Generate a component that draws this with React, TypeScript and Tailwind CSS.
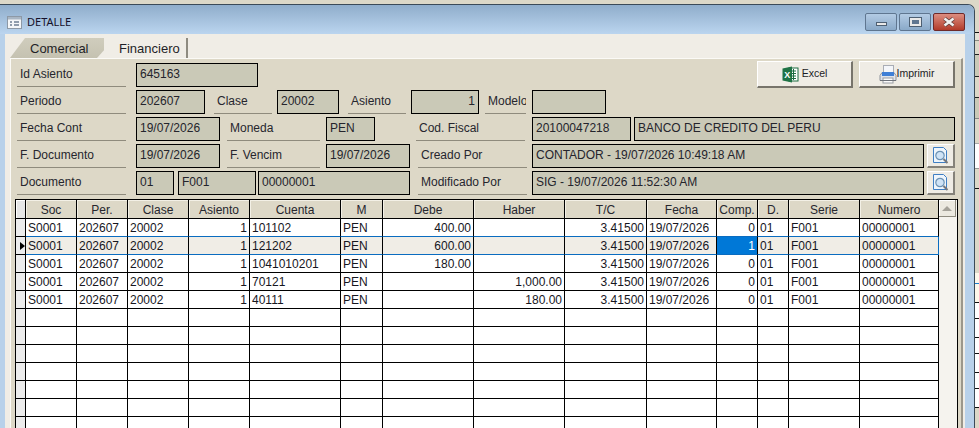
import React from "react";

const FONT = "[font-family:'Liberation_Sans',Arial,sans-serif]";

function Lbl({ w, ml = 0, pl = 3, children }: { w: number; ml?: number; pl?: number; children: React.ReactNode }) {
  return (
    <div
      className="h-[24px] shrink-0 overflow-hidden whitespace-nowrap border-b border-[#8f8b7d] text-[12px] leading-[23px] text-[#26262e]"
      style={{ width: w, marginLeft: ml, paddingLeft: pl }}
    >
      {children}
    </div>
  );
}

function Box({ w, ml = 0, right, children }: { w: number; ml?: number; right?: boolean; children?: React.ReactNode }) {
  return (
    <div
      className={`h-[24px] shrink-0 overflow-hidden whitespace-nowrap border border-black bg-[#cac9b7] px-[3px] text-[12px] leading-[21px] text-[#24242c] ${right ? "text-right" : ""}`}
      style={{ width: w, marginLeft: ml }}
    >
      {children}
    </div>
  );
}

function Row({ children }: { children: React.ReactNode }) {
  return <div className="mb-[3px] flex h-[24px] items-start">{children}</div>;
}

function ExcelIcon() {
  return (
    <svg width="17" height="17" viewBox="0 0 17 17">
      <rect x="7" y="2" width="9" height="13" fill="#fff" stroke="#1d6b40" />
      <path d="M9 5h5M9 7.5h5M9 10h5M9 12.5h5M11.5 3v11" stroke="#1d6b40" strokeWidth="1" />
      <path d="M0.5 2.5 L10 0.5 V16.5 L0.5 14.5 Z" fill="#1f7346" />
      <text x="2.2" y="12" fontSize="9" fontWeight="700" fill="#fff" fontFamily="Liberation Sans">X</text>
    </svg>
  );
}

function PrinterIcon() {
  return (
    <svg width="18" height="19" viewBox="0 0 18 19">
      <rect x="4.5" y="0.5" width="10" height="7" fill="#f4f6fa" stroke="#a9adb5" />
      <path d="M3 7.5h12l2 3v5H1v-5z" fill="#dfe3ea" stroke="#8d929b" />
      <rect x="3" y="7" width="12" height="4" fill="#3f7fd6" />
      <rect x="4" y="13" width="10" height="5" fill="#fbfbfb" stroke="#9a9da4" />
      <path d="M1 15.5h16" stroke="#6f737b" />
    </svg>
  );
}

function ZoomIcon() {
  return (
    <svg width="16" height="17" viewBox="0 0 16 17">
      <path d="M0.5 0.5H10.5L13.5 3.5V15.5H0.5Z" fill="#eef5fc" stroke="#3f7fc4" />
      <circle cx="7" cy="8.5" r="4.2" fill="#cfe3f6" stroke="#6d93b5" strokeWidth="1.2" />
      <path d="M10.5 12 L14.5 16" stroke="#77787c" strokeWidth="2" />
    </svg>
  );
}

function IconBtn() {
  return (
    <button className="ml-[3px] flex h-[24px] w-[28px] shrink-0 items-center justify-center border-r-2 border-b-2 border-t border-l border-r-[#85827a] border-b-[#85827a] border-t-white border-l-white bg-[#efece5]">
      <ZoomIcon />
    </button>
  );
}

function ToolBtn({ ml, children }: { ml: number; children: React.ReactNode }) {
  return (
    <button
      className="-mt-[2px] flex h-[27px] w-[96px] shrink-0 items-center justify-center border-r-2 border-b-2 border-t border-l border-r-[#77746b] border-b-[#77746b] border-t-white border-l-white bg-[#efece5] text-[10.5px] text-[#1c1c24]"
      style={{ marginLeft: ml }}
    >
      {children}
    </button>
  );
}

const COLS = [51, 51, 61, 61, 91, 42, 91, 91, 82, 70, 41, 31, 71, 79];
const HEAD = ["Soc", "Per.", "Clase", "Asiento", "Cuenta", "M", "Debe", "Haber", "T/C", "Fecha", "Comp.", "D.", "Serie", "Numero"];
const RIGHT = [3, 6, 7, 8, 10];
const DATA = [
  ["S0001", "202607", "20002", "1", "101102", "PEN", "400.00", "", "3.41500", "19/07/2026", "0", "01", "F001", "00000001"],
  ["S0001", "202607", "20002", "1", "121202", "PEN", "600.00", "", "3.41500", "19/07/2026", "1", "01", "F001", "00000001"],
  ["S0001", "202607", "20002", "1", "1041010201", "PEN", "180.00", "", "3.41500", "19/07/2026", "0", "01", "F001", "00000001"],
  ["S0001", "202607", "20002", "1", "70121", "PEN", "", "1,000.00", "3.41500", "19/07/2026", "0", "01", "F001", "00000001"],
  ["S0001", "202607", "20002", "1", "40111", "PEN", "", "180.00", "3.41500", "19/07/2026", "0", "01", "F001", "00000001"],
  ...Array.from({ length: 7 }, () => Array(14).fill("")),
];

function Grid() {
  return (
    <div className="ml-[4px] mt-[4px] flex w-[943px] border-l border-t border-r border-black bg-[#f6f5f0]">
      <div className="w-[923px] shrink-0">
        <div className="flex h-[19px]">
          <div className="h-[19px] w-[10px] shrink-0 border-r border-b border-black bg-[#e6e6e6] shadow-[inset_1px_1px_0_#fff]" />
          {HEAD.map((h, i) => (
            <div
              key={h}
              className="h-[19px] shrink-0 overflow-hidden border-r border-b border-black bg-[#ddd8c7] text-center text-[12px] leading-[20px] text-[#26262e] shadow-[inset_1px_1px_0_#f3f0e6]"
              style={{ width: COLS[i] }}
            >
              {h}
            </div>
          ))}
        </div>
        {DATA.map((row, r) => {
          const sel = r === 1;
          const blueBottom = r === 0 || r === 1;
          return (
            <div key={r} className="flex h-[18px]">
              <div className="relative h-[18px] w-[10px] shrink-0 border-r border-b border-black bg-[#ececec]">
                {sel && <div className="absolute left-[4px] top-[5px] h-0 w-0 border-y-[4px] border-l-[5px] border-y-transparent border-l-black" />}
              </div>
              {row.map((c, i) => {
                const active = sel && i === 10;
                const bg = active ? "bg-[#0078d7] text-white" : sel ? "bg-[#f0ede6] text-[#16161e]" : "bg-white text-[#16161e]";
                const bb = blueBottom ? "border-b-[#0a6cc0]" : "border-b-black";
                const br = sel && i === 13 ? "border-r-[#0a6cc0]" : "border-r-black";
                const align = RIGHT.includes(i) ? "pr-[2px] text-right" : "pl-[2px] text-left";
                return (
                  <div
                    key={i}
                    className={`h-[18px] shrink-0 overflow-hidden whitespace-nowrap border-r border-b text-[12px] leading-[18px] ${bg} ${bb} ${br} ${align}`}
                    style={{ width: COLS[i] }}
                  >
                    {c}
                  </div>
                );
              })}
            </div>
          );
        })}
      </div>
      <div className="w-[18px] shrink-0 bg-[#f5f3ee]">
        <div className="flex h-[17px] w-[17px] items-center justify-center border-r border-b border-[#8f8c80] border-t-white bg-[#ece9e0] shadow-[inset_1px_1px_0_#fff]">
          <div className="h-0 w-0 border-x-[5px] border-b-[5px] border-x-transparent border-b-[#a5a299]" />
        </div>
      </div>
    </div>
  );
}

const STRIP: [number, string, string][] = [
  [33, "#dcd8c8", "#111"],
  [8, "#e4e1d5", "#8a8a80"],
  [14, "#dcd8c8", "#222"],
  [22, "#cac9b7", "#222"],
  [21, "#dcd8c8", "#222"],
  [21, "#cac9b7", "#888"],
  [25, "#dcd8c8", "#aaa"],
  [25, "#fff", "#999"],
  [20, "#dcd8c8", "#111"],
  [84, "#dcd8c8", "#dcd8c8"],
  [11, "#fdf7ea", "#1a7fd0"],
  [19, "#fdf7ea", "#111"],
  [16, "#fff", "#111"],
  [19, "#fff", "#111"],
  [16, "#fff", "#111"],
  [19, "#fff", "#111"],
  [16, "#fff", "#111"],
  [19, "#fff", "#111"],
];

export default function App() {
  return (
    <div className={`flex h-[428px] w-[979px] overflow-hidden bg-[#dcd8c8] ${FONT}`}>
      <div className="mt-[4px] flex h-[424px] w-[975px] shrink-0 flex-col rounded-tr-[7px] border-t border-r border-[#3b4a58] bg-[#b8d1ea]">
        <div className="flex h-[29px] shrink-0 items-center rounded-tr-[6px] bg-gradient-to-b from-[#8fadcb] to-[#bbd5ef] pr-[9px] pt-[5px]">
          <svg className="ml-[7px]" width="15" height="13" viewBox="0 0 15 13">
            <rect x="0.5" y="0.5" width="14" height="12" fill="#f4f6f8" stroke="#8d99a6" />
            <rect x="1" y="1" width="13" height="2.5" fill="#a9b6c4" />
            <path d="M3 6h2M3 9h2M7 6h5M7 9h5" stroke="#6d7f92" strokeWidth="1.4" />
          </svg>
          <span className="ml-[5px] text-[11px] text-[#15102a] [font-family:'Noto_Sans',sans-serif]">DETALLE</span>
          <div className="ml-auto flex gap-[2px]">
            <div className="flex h-[18px] w-[32px] items-center justify-center rounded-[2px] border border-[#5f7690] bg-gradient-to-b from-[#b3cbe4] to-[#8aa9c8]">
              <div className="mt-[4px] h-[4px] w-[11px] border border-[#4d5f72] bg-[#e8e8e8]" />
            </div>
            <div className="flex h-[18px] w-[32px] items-center justify-center rounded-[2px] border border-[#5f7690] bg-gradient-to-b from-[#b3cbe4] to-[#8aa9c8]">
              <div className="h-[8px] w-[11px] border-2 border-[#e8e8e8] bg-[#5f7690] outline outline-1 outline-[#4d5f72]" />
            </div>
            <div className="flex h-[18px] w-[32px] items-center justify-center rounded-[2px] border border-[#6e2a2a] bg-gradient-to-b from-[#dc8d80] to-[#b23a2a]">
              <svg width="14" height="10" viewBox="0 0 14 10">
                <path d="M2.5 1.5 L11.5 8.5 M11.5 1.5 L2.5 8.5" stroke="#5c3a38" strokeWidth="4" />
                <path d="M2.5 1.5 L11.5 8.5 M11.5 1.5 L2.5 8.5" stroke="#f0f0f0" strokeWidth="2.6" />
              </svg>
            </div>
          </div>
        </div>
        <div className="ml-[5px] mr-[9px] min-h-0 flex-1 overflow-hidden bg-[#f0ede6] pt-[4px]">
          <div className="flex h-[20px] pl-[5px] text-[13px] text-[#1f1f27]">
            <div className="h-[20px] w-[94px] shrink-0 bg-gradient-to-b from-[#d0cdbd] to-[#c5c2b1] pl-[20px] leading-[22px] [clip-path:polygon(0_100%,15px_0,100%_0,100%_100%)]">
              Comercial
            </div>
            <div className="-ml-[7px] h-[20px] w-[91px] shrink-0 border-r-2 border-[#8e8b80] bg-[#f0ede6] pl-[22px] leading-[22px] [clip-path:polygon(0_100%,18px_0,100%_0,100%_100%)]">
              Financiero
            </div>
          </div>
          <div className="ml-[5px] h-[500px] w-[953px] border-l border-t border-r-2 border-[#fbfaf6] border-r-[#9b978b] bg-[#ddd8c7] pl-0 pt-[4px]">
            <div className="pl-[6px]">
              <Row>
                <Lbl w={109}>Id Asiento</Lbl>
                <Box w={122} ml={10}>645163</Box>
                <ToolBtn ml={499}>
                  <ExcelIcon />
                  <span className="ml-[3px]">Excel</span>
                </ToolBtn>
                <ToolBtn ml={6}>
                  <PrinterIcon />
                  <span>Imprimir</span>
                </ToolBtn>
              </Row>
              <Row>
                <Lbl w={109}>Periodo</Lbl>
                <Box w={69} ml={10}>202607</Box>
                <Lbl w={58} ml={9}>Clase</Lbl>
                <Box w={62} ml={5}>20002</Box>
                <Lbl w={58} ml={9}>Asiento</Lbl>
                <Box w={68} ml={5} right>1</Box>
                <Lbl w={41} ml={6}>Modelo</Lbl>
                <Box w={74} ml={6} />
              </Row>
              <Row>
                <Lbl w={109}>Fecha Cont</Lbl>
                <Box w={84} ml={10}>19/07/2026</Box>
                <Lbl w={93} ml={7}>Moneda</Lbl>
                <Box w={49} ml={6}>PEN</Box>
                <Lbl w={109} ml={41}>Cod. Fiscal</Lbl>
                <Box w={99} ml={7}>20100047218</Box>
                <Box w={321} ml={3}>BANCO DE CREDITO DEL PERU</Box>
              </Row>
              <Row>
                <Lbl w={109}>F. Documento</Lbl>
                <Box w={84} ml={10}>19/07/2026</Box>
                <Lbl w={93} ml={7}>F. Vencim</Lbl>
                <Box w={84} ml={6}>19/07/2026</Box>
                <Lbl w={109} ml={8}>Creado Por</Lbl>
                <Box w={392} ml={5}>CONTADOR - 19/07/2026 10:49:18 AM</Box>
                <IconBtn />
              </Row>
              <Row>
                <Lbl w={109}>Documento</Lbl>
                <Box w={38} ml={10}>01</Box>
                <Box w={78} ml={4}>F001</Box>
                <Box w={152} ml={2}>00000001</Box>
                <Lbl w={109} ml={8}>Modificado Por</Lbl>
                <Box w={392} ml={5}>SIG - 19/07/2026 11:52:30 AM</Box>
                <IconBtn />
              </Row>
            </div>
            <Grid />
          </div>
        </div>
      </div>
      <div className="w-[4px] shrink-0 overflow-hidden">
        {STRIP.map(([h, bg, line], i) => (
          <div key={i} style={{ height: h, background: bg, borderBottom: `1px solid ${line}` }} />
        ))}
      </div>
    </div>
  );
}
